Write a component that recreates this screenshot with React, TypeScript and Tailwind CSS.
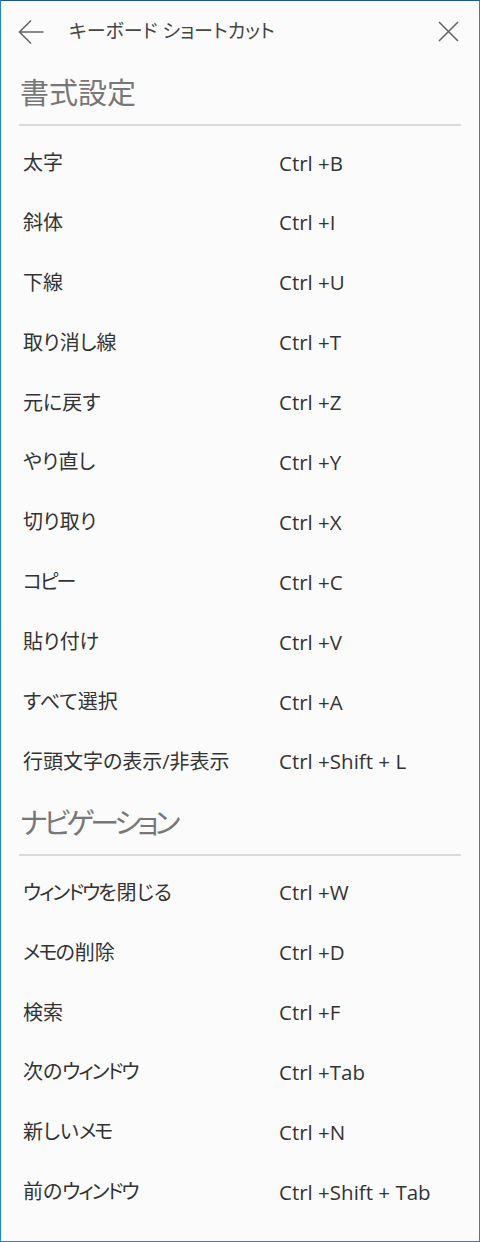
const formatting = [
  ["太字", "Ctrl +B"],
  ["斜体", "Ctrl +I"],
  ["下線", "Ctrl +U"],
  ["取り消し線", "Ctrl +T"],
  ["元に戻す", "Ctrl +Z"],
  ["やり直し", "Ctrl +Y"],
  ["切り取り", "Ctrl +X"],
  ["コピー", "Ctrl +C"],
  ["貼り付け", "Ctrl +V"],
  ["すべて選択", "Ctrl +A"],
  ["行頭文字の表示/非表示", "Ctrl +Shift + L"],
];

const navigation = [
  ["ウィンドウを閉じる", "Ctrl +W"],
  ["メモの削除", "Ctrl +D"],
  ["検索", "Ctrl +F"],
  ["次のウィンドウ", "Ctrl +Tab"],
  ["新しいメモ", "Ctrl +N"],
  ["前のウィンドウ", "Ctrl +Shift + Tab"],
];

// katakana runs are set a little tighter, like the narrow kana of the original UI font
function Label({ text }: { text: string }) {
  return (
    <>
      {text.split(/([\u30A0-\u30FF]+)/).map((part, i) =>
        /[\u30A0-\u30FF]/.test(part) ? (
          <span key={i} className="tracking-[-2px]">
            {part}
          </span>
        ) : (
          part
        )
      )}
    </>
  );
}

function Section({
  title,
  titleClass = "",
  items,
}: {
  title: string;
  titleClass?: string;
  items: string[][];
}) {
  return (
    <section>
      <h2
        className={`flex h-[62px] items-center pl-[19px] text-[29px] font-normal text-[#777] [font-feature-settings:'palt'] ${titleClass}`}
      >
        {title}
      </h2>
      <div className="mx-[18px] h-[2px] bg-[#d9d9d9]" />
      <ul className="pt-[7px]">
        {items.map(([label, keys]) => (
          <li key={label} className="flex h-[59.9px] items-center text-[#333]">
            <span className="w-[278px] pl-[22px] text-[20px] [font-feature-settings:'palt']">
              <Label text={label} />
            </span>
            <span className="text-[20.5px]">{keys}</span>
          </li>
        ))}
      </ul>
    </section>
  );
}

export default function App() {
  return (
    <div
      className="h-[1242px] w-[480px] overflow-hidden border border-[#1a86d9] border-t-[#1b5592] bg-[#fbfbfb]"
      style={{ fontFamily: '"Open Sans", "Noto Sans CJK JP", sans-serif' }}
    >
      <header className="flex h-[61px] items-center pl-[17px] pr-[20px] text-[#666]">
        {/* back arrow */}
        <svg width="26" height="26" viewBox="0 0 26 26" fill="none" stroke="currentColor" strokeWidth="1.6">
          <path d="M1.5 13 H25.5 M13 1.5 L1.5 13 L13 24.5" />
        </svg>
        <h1 className="ml-[25px] flex-1 text-[19px] text-[#444] [font-feature-settings:'palt']">
          キーボード ショートカット
        </h1>
        {/* close */}
        <svg width="21" height="21" viewBox="0 0 21 21" fill="none" stroke="currentColor" strokeWidth="1.6">
          <path d="M1 1 L20 20 M20 1 L1 20" />
        </svg>
      </header>
      <Section title="書式設定" items={formatting} />
      <Section title="ナビゲーション" titleClass="tracking-[-4px]" items={navigation} />
    </div>
  );
}
